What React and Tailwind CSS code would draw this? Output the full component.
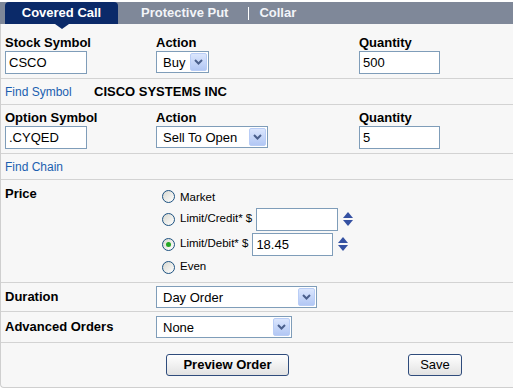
import React from "react";

const Chevron = () => (
  <svg width="9" height="6" viewBox="0 0 9 6">
    <path d="M1 1 L4.5 4.5 L8 1" fill="none" stroke="#4a5f8c" strokeWidth="2" />
  </svg>
);

const Select = ({ value, w }) => (
  <div className={`flex h-[22px] items-center border border-[#7f9db9] bg-white ${w}`}>
    <span className="pl-[6px] text-[13px] leading-none text-black">{value}</span>
    <span className="ml-auto mr-px flex h-[18px] w-[17px] items-center justify-center rounded-[2px] border border-[#b9cdf6] bg-linear-to-b from-[#dbe6fd] to-[#b2c7f4]">
      <Chevron />
    </span>
  </div>
);

const Input = ({ value, w }) => (
  <div className={`flex h-[23px] items-center border border-[#7f9db9] bg-white pl-[3px] text-[13px] leading-none text-black ${w}`}>
    {value}
  </div>
);

const Radio = ({ on }) => (
  <span className="flex h-[13px] w-[13px] shrink-0 items-center justify-center rounded-full border border-[#1c5180] bg-linear-to-br from-[#d8d8d0] to-white">
    {on && <span className="h-[5px] w-[5px] rounded-full bg-[#23a623]" />}
  </span>
);

const Spinner = () => (
  <span className="ml-[5px] flex flex-col gap-[2px]">
    <svg width="10" height="6" viewBox="0 0 10 6">
      <path d="M0 6 L5 0 L10 6 Z" fill="#3551a2" />
    </svg>
    <svg width="10" height="6" viewBox="0 0 10 6">
      <path d="M0 0 L5 6 L10 0 Z" fill="#3551a2" />
    </svg>
  </span>
);

const Label = ({ children }) => (
  <div className="text-[13px] font-bold leading-[14px] text-black">{children}</div>
);

export default function App() {
  return (
    <div className="h-[389px] w-[513px] overflow-hidden bg-white font-['Liberation_Sans',Arial,sans-serif]">
      {/* Tabs */}
      <div className="pt-[2px]">
        <div className="relative flex h-[22px] items-center bg-[#7f8899] text-[13px] font-bold">
          <div className="relative ml-[5px] flex h-full w-[113px] items-center justify-center rounded-t-[4px] bg-[#0b2a69] text-white">
            Covered Call
            <span className="absolute left-1/2 top-full h-0 w-0 -translate-x-1/2 border-x-[7px] border-t-[5px] border-x-transparent border-t-[#0b2a69]" />
          </div>
          <span className="ml-[23px] text-[#f2f4f8]">Protective Put</span>
          <span className="ml-[20px] h-[13px] w-px bg-white" />
          <span className="ml-[10px] text-[#f2f4f8]">Collar</span>
        </div>
      </div>

      <div className="rounded-bl-[4px] border-b border-l border-[#cfcfcf] bg-[#f7f7f7]">
        {/* Stock */}
        <div className="grid grid-cols-[151px_203px_1fr] border-b border-[#d3d3d3] pb-[4px] pl-[4px] pt-[12px]">
          <div>
            <Label>Stock Symbol</Label>
            <div className="mt-px"><Input value="CSCO" w="w-[82px]" /></div>
          </div>
          <div>
            <Label>Action</Label>
            <div className="mt-px"><Select value="Buy" w="w-[53px]" /></div>
          </div>
          <div>
            <Label>Quantity</Label>
            <div className="mt-px"><Input value="500" w="w-[81px]" /></div>
          </div>
        </div>

        <div className="flex h-[26px] items-center border-b border-[#d3d3d3] pl-[4px]">
          <span className="w-[89px] text-[12px] text-[#1b5fb0]">Find Symbol</span>
          <span className="text-[13px] font-bold text-black">CISCO SYSTEMS INC</span>
        </div>

        {/* Option */}
        <div className="grid grid-cols-[151px_203px_1fr] border-b border-[#d3d3d3] pb-[4px] pl-[4px] pt-[6px]">
          <div>
            <Label>Option Symbol</Label>
            <div className="mt-px"><Input value=".CYQED" w="w-[82px]" /></div>
          </div>
          <div>
            <Label>Action</Label>
            <div className="mt-px"><Select value="Sell To Open" w="w-[112px]" /></div>
          </div>
          <div>
            <Label>Quantity</Label>
            <div className="mt-px"><Input value="5" w="w-[81px]" /></div>
          </div>
        </div>

        <div className="flex h-[26px] items-center border-b border-[#d3d3d3] pl-[4px]">
          <span className="text-[12px] text-[#1b5fb0]">Find Chain</span>
        </div>

        {/* Price */}
        <div className="grid grid-cols-[151px_1fr] border-b border-[#d3d3d3] pb-[4px] pl-[4px] pt-[7px]">
          <Label>Price</Label>
          <div className="pl-[6px] text-[11.5px] text-black">
            <div className="flex h-[19px] items-center gap-[5px]">
              <Radio />
              <span className="pt-[3px]">Market</span>
            </div>
            <div className="mt-px flex h-[24px] items-center">
              <Radio />
              <span className="ml-[5px]">Limit/Credit* $</span>
              <div className="ml-[4px]"><Input value="" w="w-[82px]" /></div>
              <Spinner />
            </div>
            <div className="mt-px flex h-[24px] items-center">
              <Radio on />
              <span className="ml-[5px]">Limit/Debit* $</span>
              <div className="ml-[4px]"><Input value="18.45" w="w-[81px]" /></div>
              <Spinner />
            </div>
            <div className="flex h-[22px] items-center gap-[5px]">
              <Radio />
              <span>Even</span>
            </div>
          </div>
        </div>

        {/* Duration */}
        <div className="grid h-[29px] grid-cols-[151px_1fr] items-center border-b border-[#d3d3d3] pl-[4px]">
          <Label>Duration</Label>
          <Select value="Day Order" w="w-[161px]" />
        </div>

        <div className="grid h-[31px] grid-cols-[151px_1fr] items-center border-b border-[#d3d3d3] pl-[4px]">
          <Label>Advanced Orders</Label>
          <Select value="None" w="w-[136px]" />
        </div>

        {/* Buttons */}
        <div className="grid grid-cols-[151px_203px_1fr] pb-[11px] pl-[4px] pt-[9px]">
          <div />
          <div className="pl-[10px]">
            <button className="h-[22px] w-[123px] rounded-[3px] border border-[#2f4c7c] bg-linear-to-b from-white to-[#e2e2e2] text-[13px] font-bold leading-none text-black">
              Preview Order
            </button>
          </div>
          <div className="pl-[49px]">
            <button className="h-[22px] w-[54px] rounded-[3px] border border-[#2f4c7c] bg-linear-to-b from-white to-[#e2e2e2] text-[13px] leading-none text-black">
              Save
            </button>
          </div>
        </div>
      </div>
    </div>
  );
}
